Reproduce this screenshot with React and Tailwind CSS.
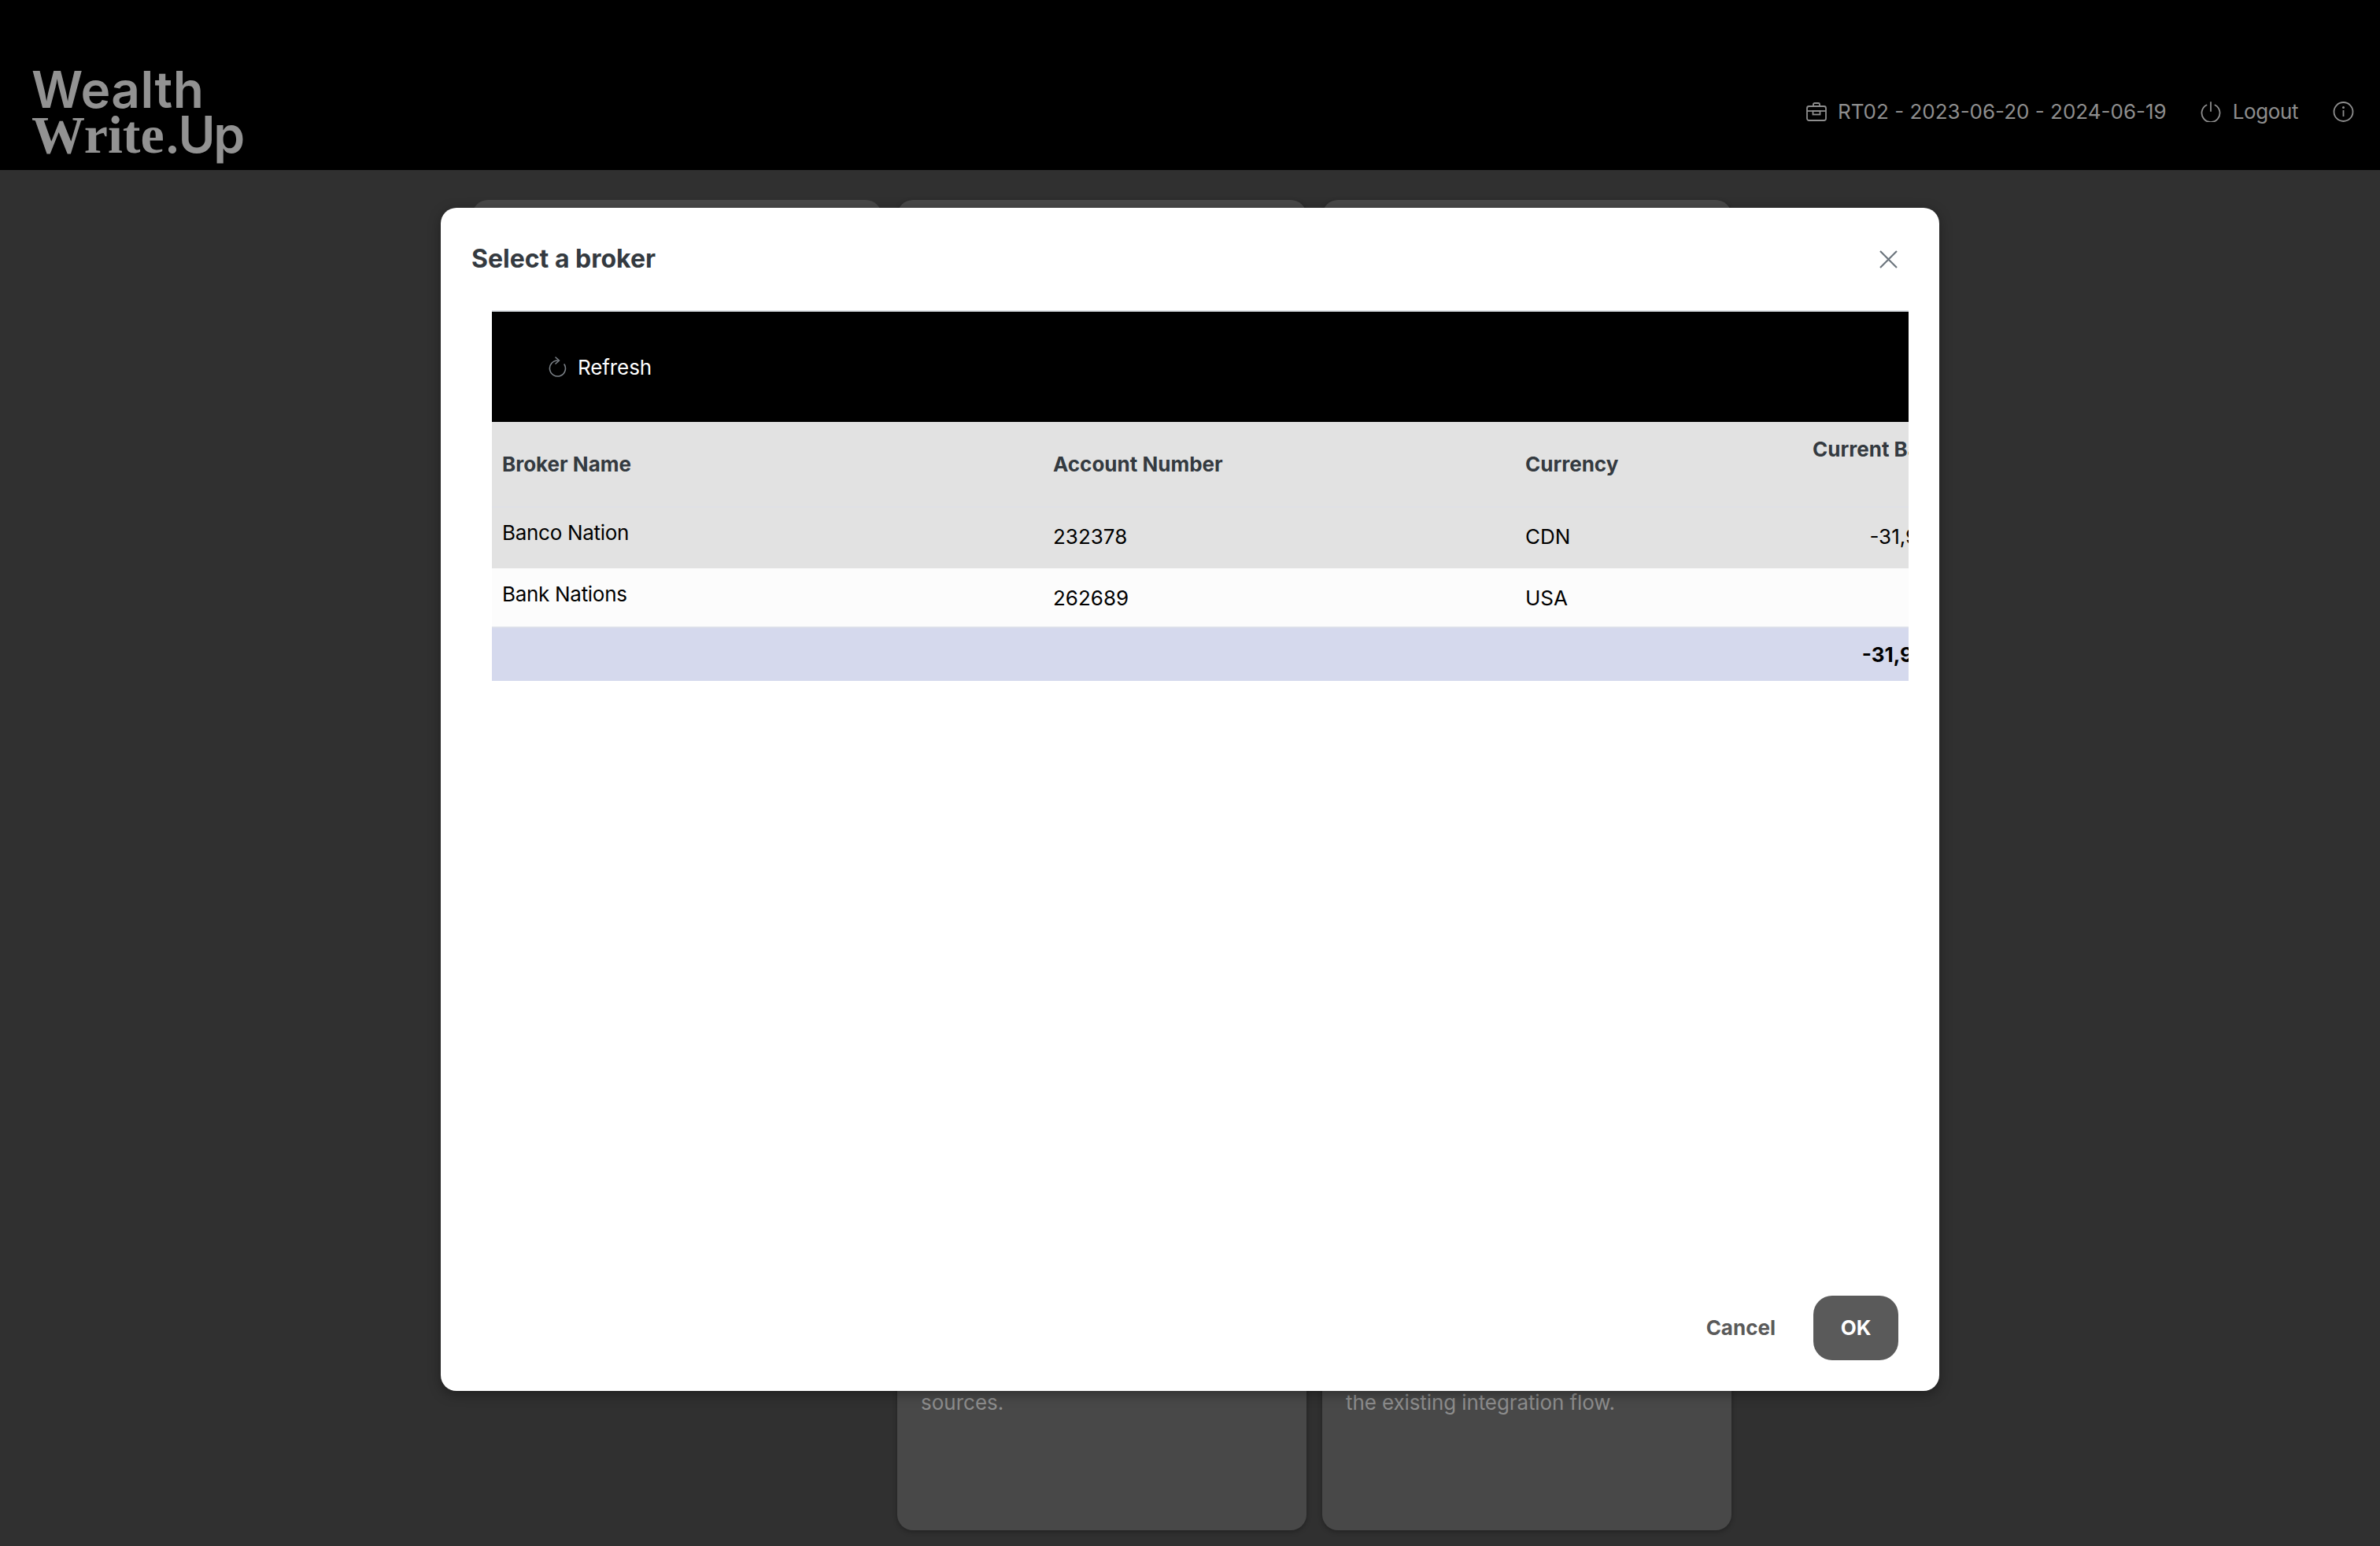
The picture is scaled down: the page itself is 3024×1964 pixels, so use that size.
const inter = "font-['Inter','Liberation_Sans',sans-serif]";

function BriefcaseIcon() {
    return (
        <svg width="26" height="24" viewBox="0 0 26 24" fill="none" stroke="#8e8e8e" strokeWidth="1.8">
            <rect x="1" y="5" width="24" height="18" rx="2.5" />
            <path d="M9 5V2.5A1.5 1.5 0 0 1 10.5 1h5A1.5 1.5 0 0 1 17 2.5V5" />
            <path d="M1 11h24" />
            <rect x="8.5" y="11" width="9" height="4.5" />
        </svg>
    );
}

function PowerIcon() {
    return (
        <svg width="28" height="26" viewBox="0 0 28 26" fill="none" stroke="#8e8e8e" strokeWidth="1.8" strokeLinecap="round">
            <path d="M14 1v11" />
            <path d="M8.5 4.5a11.5 11.5 0 1 0 11 0" />
        </svg>
    );
}

function InfoIcon() {
    return (
        <svg width="27" height="26" viewBox="0 0 27 26" fill="none" stroke="#8e8e8e" strokeWidth="1.8">
            <circle cx="13.5" cy="13" r="12" />
            <path d="M13.5 11v8" />
            <circle cx="13.5" cy="7.5" r="0.6" fill="#8e8e8e" />
        </svg>
    );
}

function RefreshIcon() {
    return (
        <svg width="23" height="26" viewBox="0 0 23 26" fill="none" stroke="#7b8187" strokeWidth="1.6" strokeLinecap="round" strokeLinejoin="round">
            <path d="M11.5 5a10 10 0 1 0 8.6 5" />
            <path d="M9 1l4.5 4-4.5 4" />
        </svg>
    );
}

function CloseIcon() {
    return (
        <svg width="23" height="23" viewBox="0 0 23 23" fill="none" stroke="#6c757d" strokeWidth="2.2">
            <path d="M1 1l21 21M22 1L1 22" />
        </svg>
    );
}

function BackgroundCards() {
    return (
        <div className="grid grid-cols-[520px_520px_520px] gap-x-5 pl-[600px] pt-[38px]">
            <div className="h-[1000px] rounded-[20px] bg-[#484848]"></div>
            <div className="flex h-[1690px] flex-col justify-end rounded-[20px] bg-[#484848] px-[30px] pb-[143px] text-[26px] leading-[38px] text-[#8d8d8d] shadow-[0_2px_6px_rgba(0,0,0,0.3)]">
                <p>sources.</p>
            </div>
            <div className="flex h-[1690px] flex-col justify-end rounded-[20px] bg-[#484848] px-[30px] pb-[143px] text-[26px] leading-[38px] tracking-[-0.1px] text-[#8d8d8d] shadow-[0_2px_6px_rgba(0,0,0,0.3)]">
                <p>the existing integration flow.</p>
            </div>
        </div>
    );
}

function BrokerTable() {
    return (
        <div className="ml-[65px] w-[1800px] overflow-hidden border-t-2 border-[#dee2e6]">
            <div className="flex h-[140px] items-center gap-[14px] bg-black pl-[72px] text-[26px] tracking-[-0.1px] text-white">
                <RefreshIcon />
                <span>Refresh</span>
            </div>
            <table className="w-[1897px] table-fixed border-collapse text-[26px] text-black">
                <colgroup>
                    <col className="w-[699px]" />
                    <col className="w-[601px]" />
                    <col className="w-[355px]" />
                    <col className="w-[242px]" />
                </colgroup>
                <thead>
                    <tr className="h-[108px] border-b-2 border-[#dfe1e6] bg-[#e2e2e2] text-left text-[#343a40]">
                        <th className="pl-[13px] pr-[14px] font-bold">Broker Name</th>
                        <th className="px-[14px] font-bold">Account Number</th>
                        <th className="pl-[13px] pr-[14px] font-bold">Currency</th>
                        <th className="px-[14px] text-right font-bold">
                            <span className="block whitespace-nowrap pb-[38px]">Current Balance</span>
                        </th>
                    </tr>
                </thead>
                <tbody>
                    <tr className="h-[78px] bg-[#e2e2e2]">
                        <td className="pb-[14px] pl-[13px] pr-[14px] tracking-[-0.3px]">Banco Nation</td>
                        <td className="px-[14px] pb-[4px]">232378</td>
                        <td className="pb-[4px] pl-[13px] pr-[14px]">CDN</td>
                        <td className="pb-[4px] pl-[14px] pr-[22px] text-right">-31,955.16</td>
                    </tr>
                    <tr className="h-[75px] bg-[#fcfcfc]">
                        <td className="pb-[10px] pl-[13px] pr-[14px] tracking-[-0.3px]">Bank Nations</td>
                        <td className="px-[14px]">262689</td>
                        <td className="pl-[13px] pr-[14px]">USA</td>
                        <td className="px-[14px] text-right"></td>
                    </tr>
                    <tr className="h-[68px] border-t-2 border-[#dcdfea] bg-[#d5d9ed] font-bold">
                        <td className="px-[14px]"></td>
                        <td className="px-[14px]"></td>
                        <td className="px-[14px]"></td>
                        <td className="pl-[14px] pr-[24px] text-right">-31,955.16</td>
                    </tr>
                </tbody>
            </table>
        </div>
    );
}

export default function App() {
    return (
        <div className={`relative h-[1964px] w-[3024px] overflow-hidden bg-[#303030] ${inter}`}>
            <header className="flex h-[216px] justify-between bg-black text-[#8e8e8e]">
                <div className="pl-[40px] pt-[85px] text-[64px] font-semibold leading-[57px] text-[#929292]">
                    <div className="tracking-[0.4px]">Wealth</div>
                    <div className="tracking-[-2.5px]">
                        <span className="font-['Liberation_Serif',serif] text-[68px] font-bold tracking-normal">Write</span>.Up
                    </div>
                </div>
                <div className="flex items-center gap-[14px] pr-[33px] pt-[68px] text-[26px] leading-[38px]">
                    <BriefcaseIcon />
                    <span>RT02 - 2023-06-20 - 2024-06-19</span>
                    <span className="ml-[28px]"><PowerIcon /></span>
                    <span className="tracking-[-0.4px]">Logout</span>
                    <span className="ml-[30px]"><InfoIcon /></span>
                </div>
            </header>

            <BackgroundCards />

            <div className="absolute left-[560px] top-[264px] flex h-[1503px] w-[1904px] flex-col rounded-[20px] bg-white shadow-[0_4px_16px_rgba(0,0,0,0.35)]">
                <div className="flex h-[130px] items-center justify-between pl-[39px] pr-[53px]">
                    <h2 className="text-[32px] font-bold text-[#343a40]">Select a broker</h2>
                    <CloseIcon />
                </div>
                <BrokerTable />
                <div className="mt-auto flex items-center justify-end gap-[48px] pb-[39px] pr-[52px]">
                    <button className="pb-[2px] text-[26px] font-bold text-[#5a5a5a]">Cancel</button>
                    <button className="h-[82px] w-[108px] rounded-[24px] bg-[#5a5a5a] pb-[2px] text-[26px] font-bold text-white">OK</button>
                </div>
            </div>
        </div>
    );
}
